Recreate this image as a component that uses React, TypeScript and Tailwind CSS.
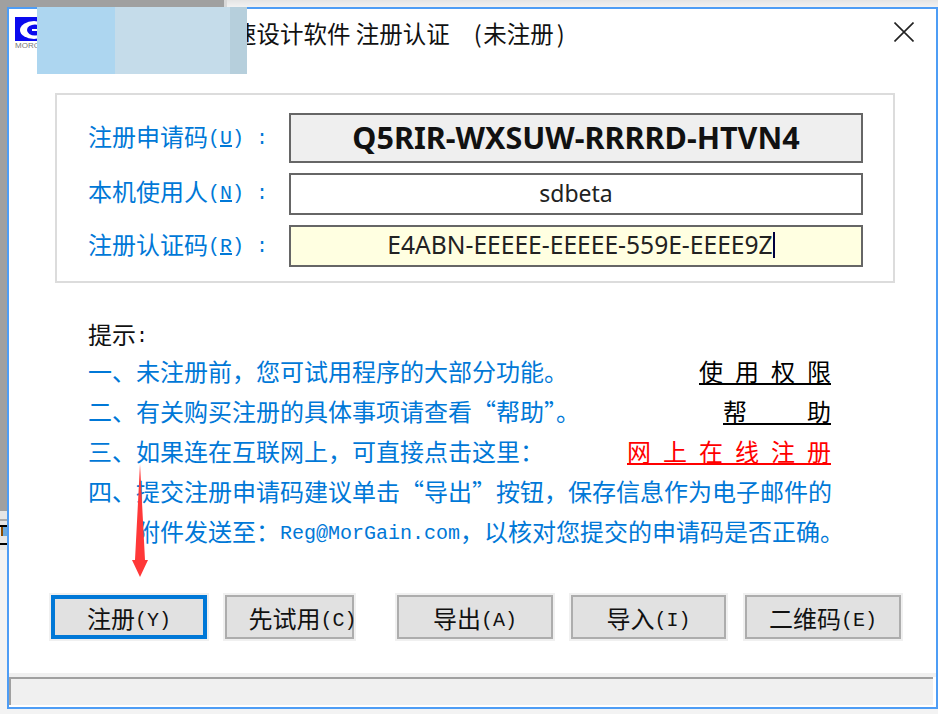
const Mono = ({ children }: { children: React.ReactNode }) => (
  <span className="align-[2px] font-['Liberation_Mono',monospace] text-[20px]">{children}</span>
);

const Logo = () => (
  <div className="flex w-[32px] flex-col">
    <svg width="32" height="24" viewBox="0 0 32 24" className="block">
      <rect width="32" height="24" fill="#0a0aee" />
      <ellipse cx="19" cy="13" rx="14" ry="9" fill="#fff" />
      <ellipse cx="20" cy="13" rx="8" ry="5.5" fill="#0a0aee" />
      <rect x="17" y="12" width="15" height="2" fill="#fff" />
    </svg>
    <span className="mt-[1px] font-['Liberation_Sans',sans-serif] text-[8px] leading-[7px] text-[#777]">MORGAIN</span>
  </div>
);

const fieldLabels = [
  { text: "注册申请码", key: "U", pad: "pb-[3px]" },
  { text: "本机使用人", key: "N", pad: "pb-[6px]" },
  { text: "注册认证码", key: "R", pad: "pb-[3px]" },
];

const Label = ({ text, hotkey, pad }: { text: string; hotkey: string; pad: string }) => (
  <div className={`flex items-center text-[24px] leading-none text-[#0078d7] ${pad}`}>
    <div className="whitespace-pre">
      {text}
      <Mono>
        (<span className="underline">{hotkey}</span>) :
      </Mono>
    </div>
  </div>
);

const Spaced = ({ chars, red, width }: { chars: string[]; red?: boolean; width: string }) => (
  <div
    className={`flex h-[26px] justify-between border-b-2 text-[24px] leading-[24px] ${width} ${
      red ? "border-[#ff0000] text-[#ff0000]" : "border-black text-black"
    }`}
  >
    {chars.map((c) => (
      <span key={c}>{c}</span>
    ))}
  </div>
);

const HintRow = ({ children, link }: { children: React.ReactNode; link?: React.ReactNode }) => (
  <div className="flex h-[40px] items-center justify-between whitespace-pre text-[24px] leading-none text-[#0078d7]">
    <div className="pb-[2px]">{children}</div>
    {link}
  </div>
);

const buttons = [
  { text: "注册", key: "(Y)", cls: "w-[156px] border-[4px] border-[#0078d7]" },
  { text: "先试用", key: "(C)", cls: "ml-[18px] w-[129px] border-2 border-[#adadad] pl-[26px]" },
  { text: "导出", key: "(A)", cls: "ml-[43px] w-[156px] border-2 border-[#adadad]" },
  { text: "导入", key: "(I)", cls: "ml-[18px] w-[155px] border-2 border-[#adadad]" },
  { text: "二维码", key: "(E)", cls: "ml-[19px] w-[156px] border-2 border-[#adadad]" },
];

export default function App() {
  return (
    <div
      lang="zh-CN"
      className="relative h-[714px] w-[938px] overflow-hidden bg-[#f3f3f3] pl-[7px] pt-[7px] font-['Noto_Sans_CJK_SC',sans-serif]"
    >
      {/* desktop behind the dialog */}
      <div className="absolute left-0 top-0 h-[511px] w-[224px] bg-[#a0a0a0]" />
      <div className="absolute left-[224px] top-0 h-[7px] w-[3px] bg-[#d8d8d8]" />
      <div className="absolute left-[227px] top-0 h-[7px] w-[711px] bg-gradient-to-b from-[#e4e4e4] to-[#f2f2f2]" />
      <div className="absolute left-0 top-[511px] h-[39px] w-[7px] bg-[#e6e6e6]">
        <div className="mt-[8px] h-[2px] bg-[#aaa]" />
        <div className="mt-[4px] flex h-[20px] items-stretch border-y-2 border-black">
          <div className="ml-[1px] h-[9px] w-[2px] bg-[#8a4a00]" />
          <div className="h-[9px] w-[4px] bg-[#6aa8dc]" />
        </div>
      </div>

      <div className="relative flex h-[702px] w-[931px] flex-col border-2 border-[#4e9df5] bg-white">
        <div className="flex h-[84px] items-start pl-[6px] pt-[8px]">
          <Logo />
          <div className="whitespace-pre pl-[186px] text-[23.5px] leading-[32px] text-[#111]">
            速设计软件 注册认证<span className="ml-[24px] tracking-[0.5px]">(</span>
            <span className="ml-[1px]">未注册</span>
            <span className="ml-[3px]">)</span>
          </div>
          <svg width="20" height="20" viewBox="0 0 20 20" className="ml-auto mr-[22px] mt-[5px]" stroke="#222" strokeWidth="1.6">
            <path d="M0.5 0.5 L19.5 19.5 M19.5 0.5 L0.5 19.5" fill="none" />
          </svg>
        </div>

        <div className="ml-[46px] grid h-[190px] w-[840px] grid-cols-[201px_574px] grid-rows-[50px_42px_42px] gap-y-[10px] border-2 border-[#dcdcdc] pl-[31px] pt-[18px]">
          <Label text={fieldLabels[0].text} hotkey={fieldLabels[0].key} pad={fieldLabels[0].pad} />
          <div className="flex items-center justify-center border-2 border-[#666] bg-[#efefef] pb-[2px] font-['Noto_Sans',sans-serif] text-[30.5px] font-bold leading-none text-[#111]">
            Q5RIR-WXSUW-RRRRD-HTVN4
          </div>
          <Label text={fieldLabels[1].text} hotkey={fieldLabels[1].key} pad={fieldLabels[1].pad} />
          <div className="flex items-center justify-center border-2 border-[#666] bg-white pb-[2px] font-['Noto_Sans',sans-serif] text-[23px] leading-none text-[#222]">
            sdbeta
          </div>
          <Label text={fieldLabels[2].text} hotkey={fieldLabels[2].key} pad={fieldLabels[2].pad} />
          <div className="flex items-center justify-center border-2 border-[#666] bg-[#ffffe1] pb-[2px] pl-[10px] font-['Noto_Sans',sans-serif] text-[24.6px] leading-none text-[#222]">
            E4ABN-EEEEE-EEEEE-559E-EEEE9Z
            <span className="h-[26px] w-[2px] bg-[#000040]" />
          </div>
        </div>

        <div className="ml-[79px] mr-[105px] mt-[32px]">
          <div className="h-[37px] pt-[2px] text-[24px] leading-[34px] text-[#111]">
            提示<Mono>:</Mono>
          </div>
          <HintRow link={<Spaced width="w-[132px]" chars={["使", "用", "权", "限"]} />}>一、未注册前，您可试用程序的大部分功能。</HintRow>
          <HintRow link={<Spaced width="w-[108px]" chars={["帮", "助"]} />}>二、有关购买注册的具体事项请查看“帮助”。</HintRow>
          <HintRow link={<Spaced red width="w-[204px]" chars={["网", "上", "在", "线", "注", "册"]} />}>三、如果连在互联网上，可直接点击这里：</HintRow>
          <HintRow>四、提交注册申请码建议单击“导出”按钮，保存信息作为电子邮件的</HintRow>
          <HintRow>
            <span className="ml-[48px]">
              附件发送至：<Mono>Reg@MorGain.com</Mono>，以核对您提交的申请码是否正确。
            </span>
          </HintRow>
        </div>

        <div className="ml-[42px] mt-[43px] flex h-[44px]">
          {buttons.map((b) => (
            <div
              key={b.key}
              className={`flex items-center justify-center bg-[#e1e1e1] pt-[2px] text-[24px] leading-none text-[#111] ring-2 ring-[#f0f0f0] ${b.cls}`}
            >
              <div className="whitespace-pre">
                {b.text}
                <Mono>{b.key}</Mono>
              </div>
            </div>
          ))}
        </div>

        <div className="mt-[34px] h-[34px] border-t-[4px] border-[#f0f0f0] pb-[2px] pr-[3px]">
          <div className="h-[28px] border-l-2 border-t-2 border-[#a0a0a0] bg-[#f0f0f0]" />
        </div>
      </div>

      {/* blurred-out patch over the title */}
      <div className="absolute left-[37px] top-[7px] flex h-[67px] w-[210px]">
        <div className="w-[78px] bg-[#add6f0]" />
        <div className="w-[115px] bg-[#c5dcea]" />
        <div className="w-[17px] bg-[#b6cfdc]" />
      </div>

      {/* red arrow annotation */}
      <svg width="18" height="114" viewBox="0 0 18 114" className="absolute left-[131px] top-[464px]">
        <path d="M9 0 L14 96 L17 96 L9 113 L1 96 L4 96 Z" fill="#ff3838" />
      </svg>
    </div>
  );
}
